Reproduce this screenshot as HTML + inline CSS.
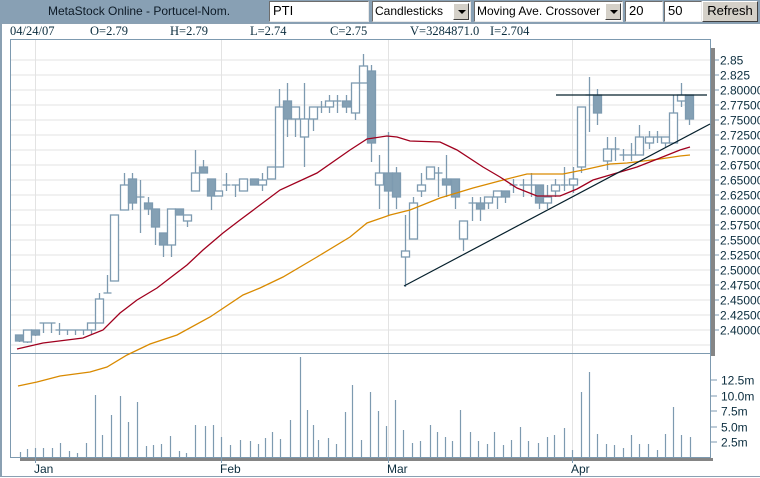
<!DOCTYPE html>
<html><head><meta charset="utf-8"><style>
*{margin:0;padding:0;box-sizing:border-box}
body{width:760px;height:478px;background:#fff;position:relative;overflow:hidden;font-family:"Liberation Sans",sans-serif}
#hdr{position:absolute;left:0;top:0;width:760px;height:23px;background:#88a0b4}
#title{position:absolute;left:48px;top:4px;font-size:12px;color:#0d1a26}
.inp{position:absolute;top:1px;height:21px;background:#fff;border:1px solid;border-color:#6d6d6d #e8e8e8 #e8e8e8 #6d6d6d;font-size:13px;padding:1px 3px;color:#000}
.sel{position:absolute;top:1px;height:21px;background:#fff;border:1px solid;border-color:#6d6d6d #e8e8e8 #e8e8e8 #6d6d6d;font-size:12px;padding:2px 2px;color:#000;white-space:nowrap;overflow:hidden}
.arr{position:absolute;right:1px;top:1px;width:16px;height:17px;background:#d4d0c8;border:1px solid;border-color:#fff #404040 #404040 #fff}
.arr:after{content:"";position:absolute;left:4px;top:6px;border-left:4px solid transparent;border-right:4px solid transparent;border-top:4px solid #000}
#btn{position:absolute;left:702px;top:1px;width:56px;height:21px;background:#d4d0c8;border:1px solid;border-color:#fff #404040 #404040 #fff;font-size:13px;text-align:center;line-height:18px;color:#000}
.d{position:absolute;top:24px;font-family:"Liberation Serif",serif;font-size:12.5px;color:#0b2d3e}
</style></head><body>
<div id="hdr"></div>
<div id="title">MetaStock Online - Portucel-Nom.</div>
<div class="inp" style="left:269px;width:100px">PTI</div>
<div class="sel" style="left:372px;width:99px">Candlesticks<div class="arr"></div></div>
<div class="sel" style="left:474px;width:149px;padding-right:18px">Moving Ave. Crossover<div class="arr"></div></div>
<div class="inp" style="left:625px;width:38px">20</div>
<div class="inp" style="left:664px;width:38px">50</div>
<div id="btn">Refresh</div>
<div class="d" style="left:10px">04/24/07</div>
<div class="d" style="left:90px">O=2.79</div>
<div class="d" style="left:170px">H=2.79</div>
<div class="d" style="left:250px">L=2.74</div>
<div class="d" style="left:330px">C=2.75</div>
<div class="d" style="left:410px">V=3284871.0</div>
<div class="d" style="left:490px">I=2.704</div>
<svg id="c" width="760" height="478" style="position:absolute;left:0;top:0" xmlns="http://www.w3.org/2000/svg"></svg>
<script>
var s='';
var C='#7d9ab0',F='#84a0b4';
s+='<line x1="0" y1="23.5" x2="760" y2="23.5" stroke="#8aa0b2"/>';
s+='<line x1="1" y1="23" x2="1" y2="477" stroke="#8aa0b2" stroke-width="2"/>';
s+='<line x1="0" y1="476.5" x2="760" y2="476.5" stroke="#8aa0b2"/>';
for(var i=0;i<20;i++){var y=60+i*15;s+='<line x1="11" y1="'+y+'" x2="710" y2="'+y+'" stroke="#e3e3e3"/>';}
[35,221,388,572].forEach(function(x){s+='<line x1="'+x+'.5" y1="40" x2="'+x+'.5" y2="458" stroke="#e3e3e3"/>';});
s+='<rect x="10.5" y="39.5" width="700" height="418" fill="none" stroke="'+C+'"/>';
s+='<line x1="10" y1="353.5" x2="711" y2="353.5" stroke="'+C+'"/>';
s+='<rect x="711" y="48" width="4" height="308" fill="#858585"/>';
s+='<rect x="20" y="458" width="693" height="3" fill="#858585"/>';
var L=['2.85','2.825','2.80000','2.77500','2.75000','2.72500','2.70000','2.67500','2.65000','2.62500','2.60000','2.57500','2.55000','2.52500','2.50000','2.47500','2.45000','2.42500','2.40000'];
L.forEach(function(t,i){var y=60+i*15;s+='<line x1="715" y1="'+y+'" x2="719" y2="'+y+'" stroke="'+C+'"/><text x="720" y="'+(y+4.5)+'" font-size="12" fill="#0b2d3e" font-family="Liberation Sans">'+t+'</text>';});
var V=[['12.5m',380],['10.0m',396],['7.5m',411],['5.0m',427],['2.5m',442]];
V.forEach(function(v){s+='<line x1="711" y1="'+v[1]+'" x2="717" y2="'+v[1]+'" stroke="'+C+'"/><text x="721" y="'+(v[1]+4.5)+'" font-size="12" fill="#0b2d3e">'+v[0]+'</text>';});
[['Jan',35],['Feb',221],['Mar',388],['Apr',572]].forEach(function(m){s+='<line x1="'+m[1]+'.5" y1="458" x2="'+m[1]+'.5" y2="463" stroke="'+C+'"/><text x="'+(m[1]-1)+'" y="473" font-size="12" fill="#0b2d3e">'+m[0]+'</text>';});
var vb=[[20,452],[27,449],[35,448],[43,448],[52,448],[60,443],[69,451],[77,453],[86,443],[95,395],[102,435],[111,415],[120,396],[128,422],[137,402],[146,446],[153,445],[161,444],[170,436],[179,451],[186,453],[195,425],[205,426],[213,425],[221,437],[230,445],[240,440],[250,441],[258,444],[265,438],[272,432],[280,439],[290,420],[300,357],[307,410],[313,425],[318,440],[328,438],[336,444],[345,412],[352,385],[361,440],[370,392],[378,411],[386,426],[395,400],[403,430],[412,443],[420,441],[430,425],[437,432],[445,437],[452,441],[460,410],[470,432],[478,441],[487,444],[494,432],[503,445],[511,440],[520,427],[528,441],[538,443],[547,437],[554,435],[564,428],[572,450],[581,392],[589,372],[597,434],[606,444],[614,445],[623,448],[631,435],[639,444],[648,444],[657,450],[665,434],[673,407],[681,435],[690,437]];
vb.forEach(function(b){s+='<line x1="'+b[0]+'.5" y1="'+b[1]+'" x2="'+b[0]+'.5" y2="458" stroke="'+C+'" stroke-width="1.2"/>';});
var K=[[19,335,342,335,341,1],[27,330,343,330,342,0],[35,330,336,330,335,1],[43,323,333,323,323,2],[51,323,333,323,323,2],[59,323,335,330,330,2],[67,330,335,330,330,2],[75,330,335,330,330,2],[83,330,335,330,330,2],[91,323,335,323,330,0],[99,293,323,299,323,0],[107,275,293,293,293,2],[114,215,281,215,281,0],[124,173,210,185,210,0],[132,173,210,179,203,1],[140,180,233,197,197,2],[148,197,215,203,209,1],[155,209,245,209,227,1],[163,233,257,233,245,1],[171,209,257,209,245,0],[179,209,215,209,215,1],[187,215,227,215,221,0],[195,150,191,173,191,0],[203,160,173,167,173,1],[211,179,210,179,196,1],[218,191,196,191,196,0],[226,173,191,185,185,2],[235,185,197,185,185,2],[243,179,191,179,191,0],[254,179,185,179,185,1],[262,173,191,180,185,0],[271,167,179,167,179,0],[279,89,167,107,167,0],[287,83,137,101,119,1],[295,107,137,107,119,0],[304,83,167,119,137,0],[313,113,131,107,119,0],[321,101,113,107,107,2],[329,95,113,101,107,0],[337,95,113,101,101,2],[346,95,113,101,107,1],[355,83,120,83,113,0],[363,54,83,66,83,0],[371,65,162,71,143,1],[379,155,209,173,185,0],[388,132,215,173,191,1],[396,167,209,173,197,1],[405,215,287,251,257,0],[413,197,239,203,239,0],[421,173,197,185,191,0],[430,167,179,167,179,0],[438,167,197,173,173,2],[446,155,197,179,185,1],[455,179,209,179,197,1],[463,221,251,221,239,0],[472,197,221,203,203,2],[480,197,221,203,209,1],[488,197,209,197,203,0],[497,191,209,191,197,0],[505,191,203,191,197,1],[513,179,193,185,185,2],[523,179,197,185,185,2],[531,173,197,185,185,2],[539,185,209,185,203,1],[547,185,209,197,203,0],[555,179,197,185,191,0],[564,167,191,185,185,2],[573,167,193,179,185,0],[581,107,173,107,167,0],[589,77,132,95,95,2],[597,89,125,95,113,1],[607,137,170,149,161,0],[615,137,161,149,149,2],[623,149,161,155,155,2],[631,143,161,155,155,2],[639,125,155,137,155,0],[649,131,149,137,143,0],[657,131,143,137,137,2],[665,137,147,137,143,0],[673,95,143,113,143,0],[681,83,107,95,101,0],[689,95,125,95,119,1]];
K.forEach(function(k){var x=k[0]+.5;s+='<line x1="'+x+'" y1="'+k[1]+'" x2="'+x+'" y2="'+k[2]+'" stroke="'+C+'" stroke-width="1.3"/>';
if(k[5]==2){s+='<line x1="'+(x-4)+'" y1="'+k[3]+'" x2="'+(x+4)+'" y2="'+k[3]+'" stroke="'+C+'" stroke-width="1.3"/>';}
else{var h=Math.max(k[4]-k[3],2);s+='<rect x="'+(k[0]-3.5)+'" y="'+k[3]+'" width="8" height="'+h+'" fill="'+(k[5]?F:'#fff')+'" stroke="'+C+'" stroke-width="1.3"/>';}});
var red=[[17,349],[43,343],[83,338],[103,330],[120,313],[137,300],[157,288],[170,278],[187,265],[203,250],[223,233],[240,220],[260,205],[280,190],[317,173],[350,150],[367,139],[387,136],[397,137],[410,141],[440,142],[457,150],[483,167],[500,177],[517,188],[537,196],[560,196],[577,189],[593,180],[610,175],[637,167],[660,158],[680,150],[690,147]];
var org=[[18,386],[37,382],[60,376],[90,372],[107,367],[127,355],[150,344],[177,335],[210,317],[243,295],[260,288],[283,277],[317,257],[350,237],[367,223],[390,215],[410,210],[440,198],[473,188],[507,179],[527,174],[563,174],[583,170],[610,164],[627,163],[660,159],[680,156],[690,155]];
function pl(a,c){return '<polyline fill="none" stroke="'+c+'" stroke-width="1.3" points="'+a.map(function(p){return p.join(',')}).join(' ')+'"/>';}
s+=pl(org,'#d98a00');s+=pl(red,'#a0001e');
s+='<line x1="404" y1="286" x2="710" y2="124" stroke="#06202c" stroke-width="1.2"/>';
s+='<line x1="556" y1="95" x2="707" y2="95" stroke="#06202c" stroke-width="1.2"/>';
document.getElementById('c').innerHTML=s;
</script>
</body></html>
